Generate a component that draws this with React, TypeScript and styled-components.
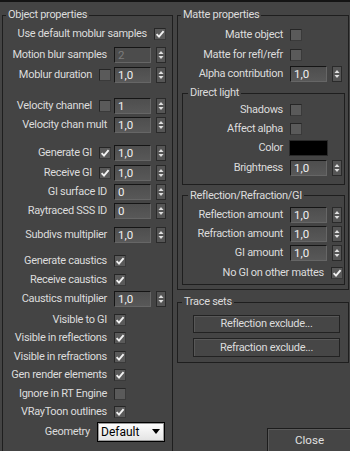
import React from 'react';
import styled, { createGlobalStyle } from 'styled-components';

const Global = createGlobalStyle`
  html, body { margin: 0; padding: 0; background: #444444; overflow: hidden; }
  body {
    font-family: Roboto, "Liberation Sans", Arial, sans-serif;
    font-size: 11px;
    letter-spacing: -0.3px;
    color: #dcdcdc;
  }
`;

const Window = styled.div`
  width: 350px;
  height: 451px;
  box-sizing: border-box;
  border-top: 2px solid #141414;
  padding: 6px 1px 0 2px;
  display: grid;
  grid-template-columns: 171px 172px;
  column-gap: 4px;
  overflow: hidden;
`;

const Group = styled.fieldset<{ $pt?: number; $pb?: number; $mt?: number; $ml?: number; $mr?: number; $mb?: number }>`
  margin: ${(p) => p.$mt ?? 0}px ${(p) => p.$mr ?? 0}px ${(p) => p.$mb ?? 0}px ${(p) => p.$ml ?? 0}px;
  padding: ${(p) => p.$pt ?? 0}px 0 ${(p) => p.$pb ?? 0}px 0;
  border: 1px solid #1e1e1e;
  min-width: 0;
  display: flex;
  flex-direction: column;
`;

const Title = styled.legend<{ $indent?: number }>`
  padding: 0 2px;
  margin-left: ${(p) => p.$indent ?? 3}px;
  line-height: 14px;
  height: 14px;
  color: #dcdcdc;
  white-space: nowrap;
`;

const Column = styled.div`
  display: flex;
  flex-direction: column;
  min-width: 0;
`;

const Row = styled.div<{ $h?: number; $mt?: number; $pr?: number }>`
  display: flex;
  justify-content: flex-end;
  align-items: center;
  height: ${(p) => p.$h ?? 19}px;
  margin-top: ${(p) => p.$mt ?? 0}px;
  padding-right: ${(p) => p.$pr ?? 6}px;
  flex-shrink: 0;
`;

const Label = styled.span`
  white-space: nowrap;
  margin-right: 7px;
  line-height: 14px;
  flex-shrink: 0;
`;

const Slot = styled.div`
  width: 52px;
  flex-shrink: 0;
  display: flex;
  align-items: center;
  justify-content: flex-start;
`;

const Box = styled.span<{ $pre?: boolean }>`
  width: 12px;
  height: 12px;
  flex-shrink: 0;
  box-sizing: border-box;
  display: inline-flex;
  align-items: center;
  justify-content: center;
  background: #5a5a5a;
  border: 1px solid #262626;
  border-right-color: #3a3a3a;
  border-bottom-color: #3a3a3a;
  margin-right: ${(p) => (p.$pre ? 3 : 0)}px;
`;

const Field = styled.div<{ $disabled?: boolean }>`
  width: 37px;
  height: 16px;
  box-sizing: border-box;
  background: ${(p) => (p.$disabled ? '#4c4c4c' : 'linear-gradient(#4e4e4e, #585858)')};
  border-top: 1px solid #151515;
  border-left: 1px solid #151515;
  border-right: 1px solid #666;
  border-bottom: 1px solid #666;
  padding-left: 3px;
  line-height: 14px;
  font-size: 11.5px;
  letter-spacing: 0;
  color: ${(p) => (p.$disabled ? '#7c7c7c' : '#f0f0f0')};
`;

const Arrows = styled.div`
  width: 10px;
  height: 16px;
  margin-left: 5px;
  box-sizing: border-box;
  background: #555555;
  border: 1px solid #2a2a2a;
  display: flex;
  align-items: center;
  justify-content: center;
`;

const Swatch = styled.div`
  width: 39px;
  height: 16px;
  box-sizing: border-box;
  background: #000;
  border: 1px solid #2a2a2a;
  margin-left: -1px;
`;

const Select = styled.div`
  width: 68px;
  height: 20px;
  flex-shrink: 0;
  box-sizing: border-box;
  background: linear-gradient(#ffffff, #e2e2e2);
  border: 1px solid #000;
  box-shadow: inset 0 0 0 1px #9a9a9a;
  display: flex;
  align-items: center;
  justify-content: space-between;
  padding: 0 4px 0 3px;
  color: #000;
  font-size: 12px;
  letter-spacing: 0;
`;

const Button = styled.button<{ $h?: number; $mt?: number }>`
  height: ${(p) => p.$h ?? 18}px;
  margin: ${(p) => p.$mt ?? 0}px 8px 0 15px;
  padding: 0;
  box-sizing: border-box;
  background: #464646;
  border: 1px solid #222;
  box-shadow: inset 1px 1px 0 #585858;
  color: #dcdcdc;
  font: inherit;
  letter-spacing: inherit;
  line-height: 14px;
`;

const CloseButton = styled.button`
  align-self: flex-end;
  margin-top: auto;
  margin-right: -2px;
  margin-bottom: -1px;
  width: 84px;
  height: 24px;
  box-sizing: border-box;
  background: #454545;
  border: 1px solid #1c1c1c;
  border-right: none;
  border-bottom: none;
  box-shadow: inset 1px 1px 0 #5a5a5a;
  color: #e0e0e0;
  font: inherit;
  font-size: 11.6px;
  letter-spacing: 0;
  padding: 0 0 2px 0;
`;

const CheckMark = () => (
  <svg width="10" height="10" viewBox="0 0 10 10">
    <path d="M1.6 5.2 L4 7.6 L8.6 2.2" fill="none" stroke="#f2f2f2" strokeWidth="1.9" />
  </svg>
);

const Check = ({ on, pre }: { on?: boolean; pre?: boolean }) => (
  <Box $pre={pre}>{on && <CheckMark />}</Box>
);

const Spinner = ({ value, disabled }: { value: string; disabled?: boolean }) => (
  <>
    <Field $disabled={disabled}>{value}</Field>
    <Arrows>
      <svg width="8" height="14" viewBox="0 0 8 14">
        <path d="M1.5 6 L4 3 L6.5 6 Z" fill="#e0e0e0" />
        <path d="M1.5 8 L4 11 L6.5 8 Z" fill="#e0e0e0" />
      </svg>
    </Arrows>
  </>
);

type RowProps = {
  label: string;
  h?: number;
  mt?: number;
  pr?: number;
  pre?: boolean;
  preOn?: boolean;
  spin?: string;
  disabled?: boolean;
  check?: boolean;
  checkEnd?: boolean;
  on?: boolean;
  swatch?: boolean;
};

const Prop = ({ label, h, mt, pr, pre, preOn, spin, disabled, check, checkEnd, on, swatch }: RowProps) => (
  <Row $h={h} $mt={mt} $pr={pr}>
    <Label>{label}</Label>
    {pre && <Check on={preOn} pre />}
    {checkEnd ? (
      <Check on={on} />
    ) : (
      <Slot>
        {spin !== undefined && <Spinner value={spin} disabled={disabled} />}
        {check && <Check on={on} />}
        {swatch && <Swatch />}
      </Slot>
    )}
  </Row>
);

export default function App() {
  return (
    <>
      <Global />
      <Window>
        <Group $pt={2.5} $mb={-20}>
          <Title>Object properties</Title>
          <Prop label="Use default moblur samples" check checkEnd on />
          <Prop label="Motion blur samples" mt={2} spin="2" disabled />
          <Prop label="Moblur duration" mt={1} pre spin="1,0" />
          <Prop label="Velocity channel" mt={12} pre spin="1" />
          <Prop label="Velocity chan mult" spin="1,0" />
          <Prop label="Generate GI" mt={9} pre preOn spin="1,0" />
          <Prop label="Receive GI" mt={1} pre preOn spin="1,0" />
          <Prop label="GI surface ID" spin="0" />
          <Prop label="Raytraced SSS ID" spin="0" />
          <Prop label="Subdivs multiplier" mt={5} spin="1,0" />
          <Prop label="Generate caustics" mt={7} check on />
          <Prop label="Receive caustics" check on />
          <Prop label="Caustics multiplier" spin="1,0" />
          <Prop label="Visible to GI" mt={2} h={18.5} check on />
          <Prop label="Visible in reflections" h={18.5} check on />
          <Prop label="Visible in refractions" h={18.5} check on />
          <Prop label="Gen render elements" h={18.5} check on />
          <Prop label="Ignore in RT Engine" h={18.5} check />
          <Prop label="VRayToon outlines" h={18.5} check on />
          <Row $h={20} $pr={7}>
            <Label>Geometry</Label>
            <Select>
              <span>Default</span>
              <svg width="8" height="5" viewBox="0 0 8 5">
                <path d="M0 0 L8 0 L4 5 Z" fill="#000" />
              </svg>
            </Select>
          </Row>
        </Group>

        <Column>
          <Group $pt={3.5} $pb={4}>
            <Title>Matte properties</Title>
            <Prop label="Matte object" check />
            <Prop label="Matte for refl/refr" mt={1} check />
            <Prop label="Alpha contribution" spin="1,0" />
            <Group $mt={2.5} $ml={4} $mr={3} $pt={0.5} $pb={6}>
              <Title $indent={5}>Direct light</Title>
              <Prop label="Shadows" pr={2} check />
              <Prop label="Affect alpha" pr={2} check />
              <Prop label="Color" pr={2} swatch />
              <Prop label="Brightness" pr={2} mt={1} spin="1,0" />
            </Group>
            <Group $mt={4} $ml={4} $mr={3} $pt={2.5} $pb={2}>
              <Title $indent={5}>Reflection/Refraction/GI</Title>
              <Prop label="Reflection amount" pr={2} spin="1,0" />
              <Prop label="Refraction amount" pr={2} spin="1,0" />
              <Prop label="GI amount" pr={2} spin="1,0" />
              <Prop label="No GI on other mattes" pr={1} mt={1} check checkEnd on />
            </Group>
          </Group>
          <Group $mt={5} $pt={6} $pb={5}>
            <Title $indent={4}>Trace sets</Title>
            <Button $h={18}>Reflection exclude...</Button>
            <Button $h={19} $mt={5}>Refraction exclude...</Button>
          </Group>
          <CloseButton>Close</CloseButton>
        </Column>
      </Window>
    </>
  );
}
